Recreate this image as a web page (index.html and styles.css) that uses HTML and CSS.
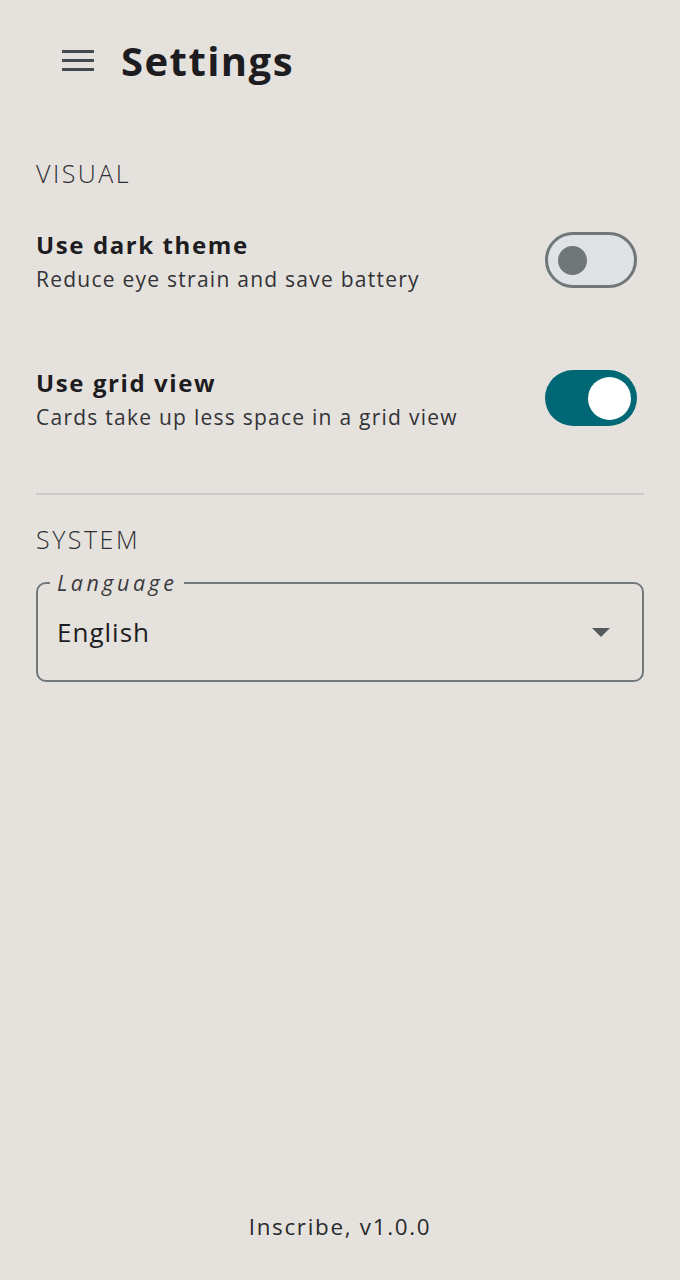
FILE: index.html
```html
<!DOCTYPE html>
<html lang="en">
<head>
<meta charset="utf-8">
<title>Settings</title>
<link rel="stylesheet" href="styles.css">
</head>
<body>
<div class="page">
  <header class="topbar">
    <svg class="menu-icon" width="32" height="24" viewBox="0 0 32 24" aria-hidden="true">
      <rect x="0" y="1" width="32" height="3" fill="#414a4c"/>
      <rect x="0" y="10" width="32" height="3" fill="#414a4c"/>
      <rect x="0" y="19" width="32" height="3" fill="#414a4c"/>
    </svg>
    <h1 class="title">Settings</h1>
  </header>

  <main class="content">
    <h2 class="section-label visual">VISUAL</h2>

    <div class="setting-row first">
      <div class="setting-text">
        <div class="setting-title">Use dark theme</div>
        <div class="setting-desc">Reduce eye strain and save battery</div>
      </div>
      <div class="toggle off"><span class="thumb"></span></div>
    </div>

    <div class="setting-row second">
      <div class="setting-text">
        <div class="setting-title">Use grid view</div>
        <div class="setting-desc">Cards take up less space in a grid view</div>
      </div>
      <div class="toggle on"><span class="thumb"></span></div>
    </div>

    <hr class="divider">

    <h2 class="section-label system">SYSTEM</h2>

    <fieldset class="select-field">
      <legend class="select-label">Language</legend>
      <div class="select-value">
        <span>English</span>
        <svg class="caret" width="18" height="10" viewBox="0 0 18 10" aria-hidden="true">
          <path d="M0 0 L18 0 L9 9 Z" fill="#555a5c"/>
        </svg>
      </div>
    </fieldset>
  </main>

  <footer class="footer">Inscribe, v1.0.0</footer>
</div>
</body>
</html>
```

FILE: styles.css
```css
* { box-sizing: border-box; }

html, body {
  margin: 0;
  padding: 0;
  background: #e5e2de;
}

body {
  font-family: "Open Sans", "DejaVu Sans", sans-serif;
  color: #1d1c20;
}

.page {
  min-height: 1280px;
  display: flex;
  flex-direction: column;
}

.topbar {
  height: 122px;
  display: flex;
  align-items: center;
  padding-left: 62px;
  gap: 27px;
}

.menu-icon { display: block; }

.title {
  margin: 0;
  font-size: 40px;
  font-weight: 700;
  letter-spacing: 1.45px;
  line-height: 48px;
  color: #1d1c20;
}

.content {
  padding: 0 36px;
}

.section-label {
  margin: 0;
  font-size: 25px;
  font-weight: 300;
  line-height: 36px;
  letter-spacing: 2.5px;
  color: #2f2f32;
}

.section-label.visual { margin-top: 33px; }

.setting-row {
  display: flex;
  align-items: center;
  justify-content: space-between;
}

.setting-row.first { margin-top: 37px; }
.setting-row.second { margin-top: 70px; }

.setting-title {
  font-size: 24px;
  font-weight: 700;
  line-height: 34px;
  letter-spacing: 1.6px;
  color: #1d1c20;
}

.setting-desc {
  font-size: 21px;
  font-weight: 400;
  line-height: 34px;
  letter-spacing: 1.25px;
  color: #333236;
}

.toggle {
  width: 92px;
  height: 56px;
  border-radius: 28px;
  display: flex;
  align-items: center;
  margin-right: 7px;
  margin-bottom: 4px;
}

.toggle.off {
  background: #dfe3e5;
  border: 3px solid #6f7779;
  padding-left: 10px;
}

.toggle.off .thumb {
  width: 29px;
  height: 29px;
  border-radius: 50%;
  background: #6f7779;
}

.toggle.on {
  background: #006874;
  justify-content: flex-end;
  padding-right: 6px;
}

.toggle.on .thumb {
  width: 43px;
  height: 43px;
  border-radius: 50%;
  background: #ffffff;
}

.divider {
  margin: 59px 0 0 0;
  border: 0;
  height: 2px;
  background: #c8cbcb;
}

.section-label.system { margin-top: 26px; }

.select-field {
  margin: 14px 0 0 0;
  padding: 0 20px 11px 19px;
  border: 2px solid #72787a;
  border-radius: 10px;
  min-width: 0;
}

.select-label {
  margin-left: -7px;
  padding: 0 7px;
  font-size: 21.5px;
  font-style: italic;
  line-height: 24px;
  letter-spacing: 3.5px;
  color: #3a3a3d;
}

.select-value {
  height: 74px;
  display: flex;
  align-items: center;
  justify-content: space-between;
  font-size: 26px;
  letter-spacing: 1px;
  color: #1d1c20;
}

.caret { display: block; margin-right: 12px; margin-top: 2px; }

.footer {
  margin-top: auto;
  padding-bottom: 37px;
  text-align: center;
  font-size: 22.4px;
  line-height: 32px;
  letter-spacing: 1.7px;
  color: #2a2a2d;
}
```
